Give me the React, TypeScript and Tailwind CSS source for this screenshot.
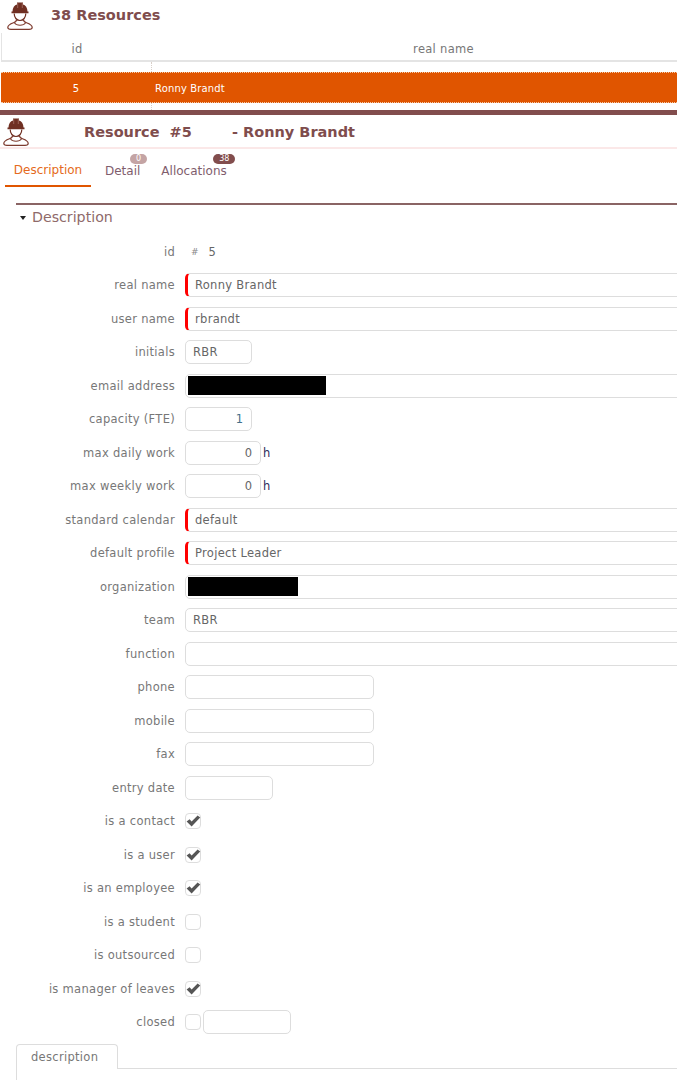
import React from "react";

function Worker({ className }: { className?: string }) {
  return (
    <svg className={className} width="26" height="28" viewBox="0 0 26 28" fill="none">
      <path d="M5.5 9.5 C5.5 5.5 7.5 3 10 2.4 V0.4 H16 V2.4 C18.5 3 20.5 5.5 20.5 9.5 H21.5 V11.2 H4.5 V9.5 Z" fill="#6f2f22" />
      <path d="M10.7 1 V6 M15.3 1 V6" stroke="#b98a80" strokeWidth="0.6" />
      <path d="M7.2 11.5 C7.2 15.5 9.6 18.5 13 18.5 C16.4 18.5 18.8 15.5 18.8 11.5" stroke="#6f2f22" strokeWidth="1.2" />
      <path d="M9.6 17.5 C9.6 19.4 8.8 20 6.5 20.8 C3 22 0.8 23.4 0.8 25.6 C0.8 27 2 27.4 4 27.4 H22 C24 27.4 25.2 27 25.2 25.6 C25.2 23.4 23 22 19.5 20.8 C17.2 20 16.4 19.4 16.4 17.5" stroke="#7d3a2e" strokeWidth="1.2" />
      <path d="M7.5 21 C9.5 24 16.5 24 18.5 21" stroke="#7d3a2e" strokeWidth="1.1" />
    </svg>
  );
}

function Check() {
  return (
    <svg width="15" height="12" viewBox="0 0 15 12" className="absolute left-[0px] top-[1px]">
      <path d="M0.6 6.4 L3.6 4.2 L5.6 6.6 L11.6 0.6 L14.2 2.6 L5.6 11.6 Z" fill="#555555" />
    </svg>
  );
}

const box = "h-[24px] rounded-[5px] border border-[#dddddd] bg-white shrink-0";

function TextField({ value, required, w = "w-[600px]" }: { value?: string; required?: boolean; w?: string }) {
  return (
    <div
      className={`${box} ${w} flex items-center px-[7px] pt-[1px] text-[11.5px] tracking-[0.3px] text-[#666666] ${
        required ? "border-l-[3px] border-l-[#ff0000]" : ""
      }`}
    >
      {value}
    </div>
  );
}

function Masked({ w }: { w: string }) {
  return (
    <div className={`${box} w-[600px] flex items-center pl-[2px]`}>
      <div className={`h-[19px] bg-black ${w}`} />
    </div>
  );
}

function NumField({ value, w, color = "text-[#666666]" }: { value: string; w: string; color?: string }) {
  return (
    <div className={`${box} ${w} flex items-center justify-end pr-[8px] pt-[1px] text-[11.5px] ${color}`}>{value}</div>
  );
}

function CheckBox({ on }: { on?: boolean }) {
  return (
    <div className="relative h-[16px] w-[16px] shrink-0 rounded-[4px] border border-[#dddddd] bg-white">
      {on && <Check />}
    </div>
  );
}

function Row({ label, children }: { label: string; children?: React.ReactNode }) {
  return (
    <div className="flex h-[33.5px] items-center">
      <div className="w-[175px] shrink-0 whitespace-nowrap pt-[1px] text-right text-[11.5px] tracking-[0.3px] text-[#777777]">
        {label}
      </div>
      <div className="ml-[10px] flex items-center">{children}</div>
    </div>
  );
}

export default function App() {
  return (
    <div
      className="h-[1080px] w-[677px] overflow-hidden bg-white"
      style={{ fontFamily: '"DejaVu Sans", Verdana, sans-serif' }}
    >
      {/* list header */}
      <div className="flex h-[33px] items-start pl-[7px] pt-[2px]">
        <Worker className="shrink-0" />
        <div className="ml-[18px] mt-[4px] text-[14.5px] font-bold leading-[18px] text-[#7f4d4d]">38 Resources</div>
      </div>

      {/* grid head */}
      <div className="ml-[1px] flex h-[29px] items-center border-b-2 border-l border-[#e4e4e4] pt-[6px] text-[11.5px] tracking-[0.3px] text-[#777777]">
        <div className="w-[150px] text-center">id</div>
        <div className="flex-1 pl-[58px] text-center">real name</div>
      </div>

      {/* grid body */}
      <div className="relative ml-[1px] h-[48px] pt-[10px]">
        <div className="absolute bottom-0 left-[150px] top-0 border-l border-dotted border-[#d8cfc8]" />
        <div className="relative flex h-[31px] items-center border-y border-dotted border-[#f3c9a8] bg-[#e05500] pt-[1px] text-[10px] tracking-[0.15px] text-white">
          <div className="w-[150px] text-center">5</div>
          <div className="pl-[4px]">Ronny Brandt</div>
        </div>
      </div>

      {/* detail head */}
      <div className="h-[5px] bg-[#824d4d]" />
      <div className="flex h-[34px] items-start border-b-2 border-[#fbe8e8] pl-[3px]">
        <Worker className="mt-[3px] shrink-0" />
        <div className="ml-[55px] mt-[8px] flex whitespace-pre text-[14.5px] font-bold leading-[18px] text-[#7f4d4d]">
          <span className="w-[148px]">Resource  #5</span>
          <span>- Ronny Brandt</span>
        </div>
      </div>

      {/* tabs */}
      <div className="ml-[5px] flex h-[38px] text-[12px] text-[#7f5d6d]">
        <div className="flex h-[38px] w-[86px] items-center justify-center border-b-2 border-[#e05500] pt-[5px] text-[#e56a20]">
          Description
        </div>
        <div className="relative ml-[14px] flex h-[38px] items-center pt-[5px]">
          Detail
          <span className="absolute left-[25px] top-[5px] flex h-[10px] w-[17px] items-center justify-center rounded-full bg-[#c4a4a4] text-[8px] text-white">
            0
          </span>
        </div>
        <div className="relative ml-[21px] flex h-[38px] items-center pt-[5px]">
          Allocations
          <span className="absolute left-[52px] top-[5px] flex h-[10px] w-[22px] items-center justify-center rounded-full bg-[#824d4d] text-[8px] text-white">
            38
          </span>
        </div>
      </div>

      {/* section */}
      <div className="ml-[16px] mt-[16px] border-t-2 border-[#8a6464]">
        <div className="flex h-[25px] items-center pl-[4px] text-[14.2px] text-[#8f6a6a]">
          <span className="mr-[6px] h-0 w-0 border-x-[3.5px] border-t-[4px] border-x-transparent border-t-[#222222]" />
          Description
        </div>
      </div>

      <div className="mt-[5px]">
        <Row label="id">
          <span className="ml-[6px] pt-[1px] text-[9px] text-[#888888]">#</span>
          <span className="ml-[10px] pt-[1px] text-[11.5px] text-[#666666]">5</span>
        </Row>
        <Row label="real name"><TextField required value="Ronny Brandt" /></Row>
        <Row label="user name"><TextField required value="rbrandt" /></Row>
        <Row label="initials"><TextField value="RBR" w="w-[67px]" /></Row>
        <Row label="email address"><Masked w="w-[138px]" /></Row>
        <Row label="capacity (FTE)"><NumField value="1" w="w-[67px]" color="text-[#44708a]" /></Row>
        <Row label="max daily work">
          <NumField value="0" w="w-[76px]" />
          <span className="ml-[2px] pt-[1px] text-[11.5px] text-[#2a2a5a]">h</span>
        </Row>
        <Row label="max weekly work">
          <NumField value="0" w="w-[76px]" />
          <span className="ml-[2px] pt-[1px] text-[11.5px] text-[#2a2a5a]">h</span>
        </Row>
        <Row label="standard calendar"><TextField required value="default" /></Row>
        <Row label="default profile"><TextField required value="Project Leader" /></Row>
        <Row label="organization"><Masked w="w-[110px]" /></Row>
        <Row label="team"><TextField value="RBR" /></Row>
        <Row label="function"><TextField /></Row>
        <Row label="phone"><TextField w="w-[189px]" /></Row>
        <Row label="mobile"><TextField w="w-[189px]" /></Row>
        <Row label="fax"><TextField w="w-[189px]" /></Row>
        <Row label="entry date"><TextField w="w-[88px]" /></Row>
        <Row label="is a contact"><CheckBox on /></Row>
        <Row label="is a user"><CheckBox on /></Row>
        <Row label="is an employee"><CheckBox on /></Row>
        <Row label="is a student"><CheckBox /></Row>
        <Row label="is outsourced"><CheckBox /></Row>
        <Row label="is manager of leaves"><CheckBox on /></Row>
        <Row label="closed">
          <CheckBox />
          <div className={`${box} ml-[2px] w-[88px]`} />
        </Row>
      </div>

      {/* bottom tab */}
      <div className="ml-[16px] mt-[5px] border-b border-[#dddddd]">
        <div className="-mb-px flex h-[25px] w-[102px] items-center rounded-t-[4px] border border-b-0 border-[#dddddd] bg-white pl-[14px] pt-[1px] text-[11.5px] tracking-[0.3px] text-[#777777]">
          description
        </div>
      </div>
      <div className="ml-[16px] h-[20px] border-l border-[#dddddd]" />
    </div>
  );
}
